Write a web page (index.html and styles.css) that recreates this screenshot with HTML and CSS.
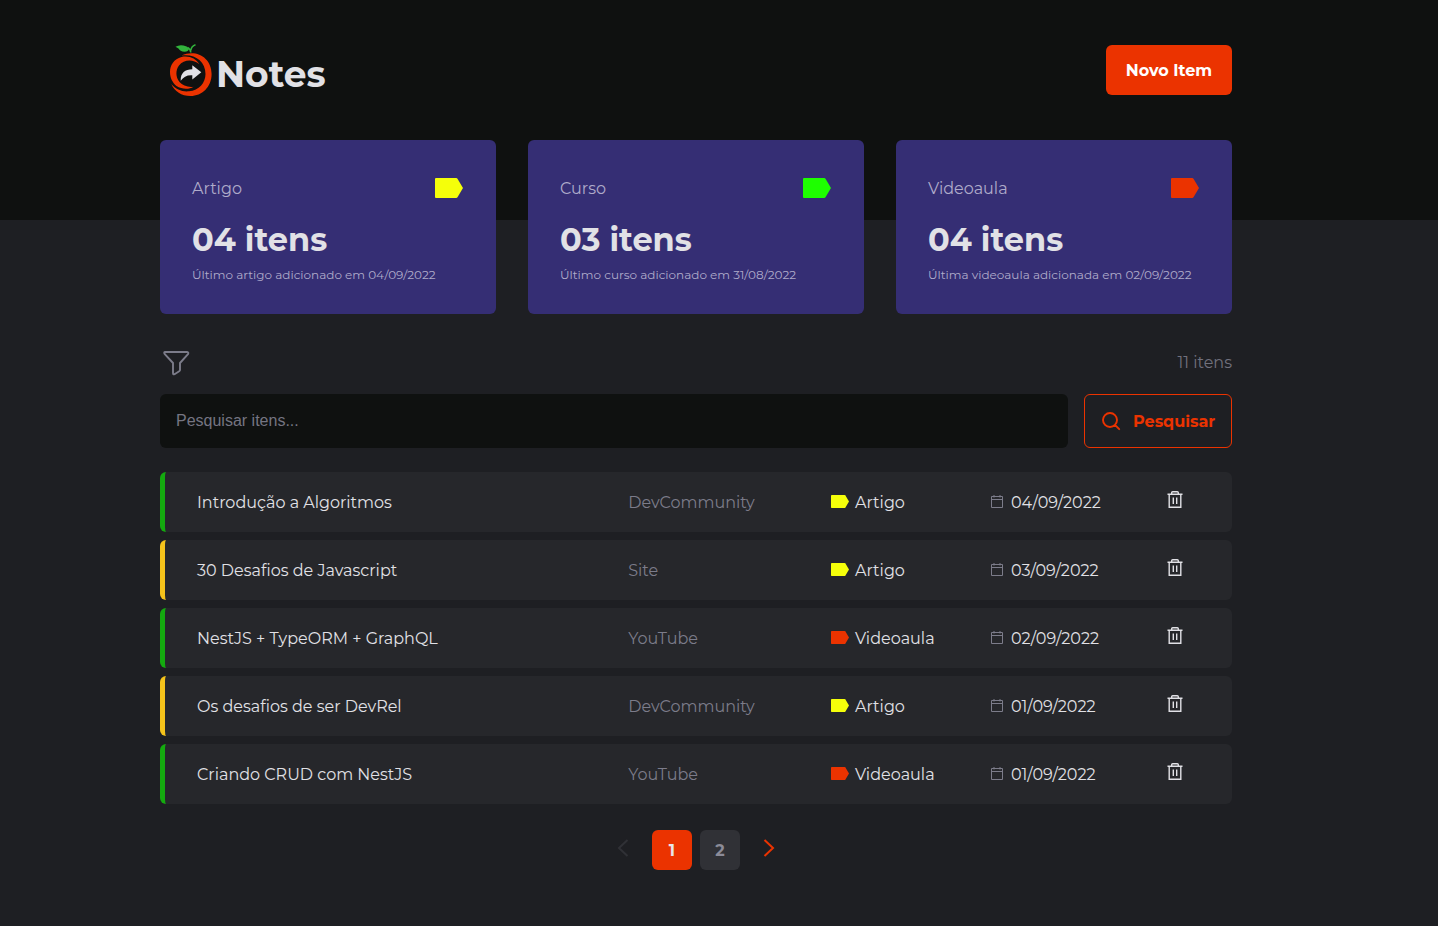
FILE: index.html
```html
<!DOCTYPE html>
<html lang="pt-BR">
<head>
<meta charset="utf-8">
<title>Notes</title>
<link rel="stylesheet" href="styles.css">
</head>
<body>
<svg class="sprite" xmlns="http://www.w3.org/2000/svg">
  <symbol id="tag" viewBox="0 0 28 20"><path d="M1 0H21.2Q22 0 22.5.8L28 10L22.5 19.2Q22 20 21.2 20H1Q0 20 0 19V1Q0 0 1 0Z" fill="currentColor"/></symbol>
  <symbol id="calendar" viewBox="0 0 12 13"><path d="M.5 1.5H11.5V12.5H.5ZM.5 4.5H11.5M3 0V2.5M9 0V2.5" fill="none" stroke="currentColor"/></symbol>
  <symbol id="trash" viewBox="0 0 16 18"><path d="M.5 3.2H15.500M2.200 3.200V16.200H13.800V3.200M4.700 3V1.800Q4.700.8 5.700.8H10.300Q11.300.8 11.300 1.800V3M6.300 6.500V13M9.700 6.500V13" fill="none" stroke="currentColor" stroke-width="1.400"/></symbol>
</svg>
<header class="header">
  <div class="container header-inner">
    <div class="logo">
      <svg class="logo-mark" viewBox="0 0 44 54">
        <path d="M6.500 3.800Q10 1.600 14.500 2.500Q18 3 20 5.500Q19.500 8.800 15.500 8.800Q11 8.500 9.500 5.500Z" fill="#32b43c"/>
        <path d="M18.500 4.500Q21.500 6 21.800 9.500M21.800 7.500Q22.500 3 26.500 1.800" fill="none" stroke="#32b43c" stroke-width="1.500"/>
        <path d="M30.300 21.300C27 15.500 20 12.300 12.500 14C5 16 1 22 1 29C1 35 3.500 39.500 7.500 43C13 46.500 20 46.700 24.500 43.700C19 44.500 13.500 42.500 10.500 39C6.500 34 6.500 27 10 22.500C14.500 17 23.500 15.500 30.300 21.300Z" fill="#eb3300"/>
        <path d="M12.500 12.500C27 5.800 42.600 14.500 42.600 31C42.600 44 33 53 21.500 53C12.500 53 5.500 48.500 2.300 41C7 46.500 13 49 20 48.300C30 47.300 36.500 40 36.500 31C36.500 18 25.500 10.500 12.500 12.500Z" fill="#eb3300"/>
        <path d="M11.700 37.700C11.500 30 16 26.300 23.300 26.300V22.300L32.300 29.300L23.300 36.500V32.200C18 31.800 14.500 33.800 11.700 37.700Z" fill="#e1e1e6"/>
      </svg>
      <span class="logo-text">Notes</span>
    </div>
    <button class="new-item"><span>Novo Item</span></button>
  </div>
</header>
<main class="container">
  <section class="cards">
    <article class="card"><div class="card-head"><span>Artigo</span><svg class="tag-big yellow"><use href="#tag"/></svg></div><strong class="count">04 itens</strong><p class="last">Último artigo adicionado em 04/09/2022</p></article>
    <article class="card"><div class="card-head"><span>Curso</span><svg class="tag-big lime"><use href="#tag"/></svg></div><strong class="count">03 itens</strong><p class="last">Último curso adicionado em 31/08/2022</p></article>
    <article class="card"><div class="card-head"><span>Videoaula</span><svg class="tag-big red"><use href="#tag"/></svg></div><strong class="count">04 itens</strong><p class="last">Última videoaula adicionada em 02/09/2022</p></article>
  </section>
  <div class="toolbar">
    <svg class="filter" viewBox="0 0 28 28"><path d="M3 3H25Q27 3.300 26 5.200L18 14V21Q18 21.700 17.200 22.200L12.500 25.200Q11 25.700 11 24V14L2.800 5.200Q1.500 3.300 3 3Z" fill="none" stroke="currentColor" stroke-width="1.900" stroke-linejoin="round"/></svg>
    <span class="total">11 itens</span>
  </div>
  <form class="search">
    <input class="search-input" type="text" placeholder="Pesquisar itens...">
    <button class="search-btn" type="button"><svg viewBox="0 0 20 20"><path d="M14.200 14.200L18.200 18.200M16 9A7 7 0 1 1 2 9A7 7 0 0 1 16 9Z" fill="none" stroke="currentColor" stroke-width="1.900" stroke-linecap="round"/></svg><span>Pesquisar</span></button>
  </form>
  <section class="list">
    <div class="row done"><span>Introdução a Algoritmos</span><span class="source">DevCommunity</span><span class="kind"><svg class="tag yellow"><use href="#tag"/></svg><span>Artigo</span></span><span class="date"><svg class="cal"><use href="#calendar"/></svg><span>04/09/2022</span></span><svg class="trash"><use href="#trash"/></svg></div>
    <div class="row pending"><span>30 Desafios de Javascript</span><span class="source">Site</span><span class="kind"><svg class="tag yellow"><use href="#tag"/></svg><span>Artigo</span></span><span class="date"><svg class="cal"><use href="#calendar"/></svg><span>03/09/2022</span></span><svg class="trash"><use href="#trash"/></svg></div>
    <div class="row done"><span>NestJS + TypeORM + GraphQL</span><span class="source">YouTube</span><span class="kind"><svg class="tag red"><use href="#tag"/></svg><span>Videoaula</span></span><span class="date"><svg class="cal"><use href="#calendar"/></svg><span>02/09/2022</span></span><svg class="trash"><use href="#trash"/></svg></div>
    <div class="row pending"><span>Os desafios de ser DevRel</span><span class="source">DevCommunity</span><span class="kind"><svg class="tag yellow"><use href="#tag"/></svg><span>Artigo</span></span><span class="date"><svg class="cal"><use href="#calendar"/></svg><span>01/09/2022</span></span><svg class="trash"><use href="#trash"/></svg></div>
    <div class="row done"><span>Criando CRUD com NestJS</span><span class="source">YouTube</span><span class="kind"><svg class="tag red"><use href="#tag"/></svg><span>Videoaula</span></span><span class="date"><svg class="cal"><use href="#calendar"/></svg><span>01/09/2022</span></span><svg class="trash"><use href="#trash"/></svg></div>
  </section>
  <nav class="pages">
    <svg class="arrow off" viewBox="0 0 12 18"><path d="M10.500 1L2 9L10.500 17" fill="none" stroke="currentColor" stroke-width="2"/></svg>
    <span class="page current">1</span><span class="page">2</span>
    <svg class="arrow" viewBox="0 0 12 18"><path d="M1.500 1L10 9L1.500 17" fill="none" stroke="currentColor" stroke-width="2"/></svg>
  </nav>
</main>
</body>
</html>
```
FILE: styles.css
```css
* { box-sizing: border-box; margin: 0; padding: 0; }
body { background: #1e1f23; color: #e1e1e6; font: 400 16px/26px Montserrat, Inter, sans-serif; height: 926px; overflow: hidden; }
button, input { font: inherit; }
svg { display: block; flex: none; }
.sprite { position: absolute; width: 0; height: 0; }
.container { width: 1072px; margin-left: 160px; }
.header { height: 220px; background: #0f1110; padding-top: 40px; }
.header-inner { display: flex; justify-content: space-between; align-items: flex-start; }
.logo { display: flex; padding: 3px 0 0 9px; }
.logo-mark { width: 44px; height: 54px; }
.logo-text { font-size: 36px; line-height: 46px; font-weight: 700; padding: 8px 0 0 3px; }
.new-item { width: 126px; height: 50px; margin-top: 5px; padding-top: 2px; border: 0; border-radius: 6px; background: #eb3300; color: #fff; font-weight: 700; }
.cards { display: grid; grid-template-columns: repeat(3, 1fr); gap: 32px; margin-top: -80px; }
.card { height: 174px; padding: 35px 32px; border-radius: 6px; background: #352e74; }
.card-head { display: flex; justify-content: space-between; align-items: center; height: 26px; color: #afabca; }
.card-head span, .total, .search-btn span, .row span:not(.kind):not(.date) { padding-top: 2px; }
.tag-big { width: 28px; height: 20px; margin-right: 1px; }
.yellow { color: #f5ff0a; }
.lime { color: #1eff00; }
.red { color: #eb3300; }
.count { display: block; font-size: 32px; line-height: 40px; margin-top: 19px; }
.last { font-size: 12px; line-height: 18px; margin-top: 6px; color: #afabca; white-space: nowrap; }
.toolbar { display: flex; justify-content: space-between; align-items: center; height: 32px; margin-top: 32px; padding-left: 2px; color: #7c7c8a; }
.filter { width: 28px; height: 28px; margin-top: 1px; }
.total { color: #71717d; }
.search { display: flex; gap: 16px; margin-top: 16px; }
.search-input { width: 908px; height: 54px; padding: 0 16px; border: 0; border-radius: 6px; background: #0f1110; font-family: "Liberation Sans", sans-serif; }
.search-input::placeholder { color: #757582; }
.search-btn { display: flex; align-items: center; gap: 12px; width: 148px; height: 54px; padding-left: 16px; border: 1px solid #eb3300; border-radius: 6px; background: none; color: #eb3300; font-weight: 700; }
.search-btn svg { width: 20px; height: 20px; }
.list { display: grid; gap: 8px; margin-top: 24px; }
.row { display: grid; grid-template-columns: 431.2px 202.8px 160px 176px 16px; align-items: center; height: 60px; padding-left: 32px; border-left: 5px solid; border-radius: 6px; background: #26272b; white-space: nowrap; }
.done { border-left-color: #14aa0f; }
.pending { border-left-color: #f5c31b; }
.source { color: #7c7c8a; }
.kind, .date { display: flex; align-items: center; gap: 6px; }
.tag { width: 18px; height: 13px; margin-bottom: 1px; }
.cal { width: 12px; height: 13px; color: #7c7c8a; margin-bottom: 1px; }
.date { gap: 8px; }
.trash { width: 16px; height: 18px; margin-bottom: 4px; }
.pages { display: flex; align-items: center; gap: 8px; margin: 26px 0 0 457px; color: #eb3300; }
.page { display: grid; place-items: center; width: 40px; height: 40px; padding-top: 2px; border-radius: 6px; background: #303136; color: #8b8b98; font-weight: 700; }
.current { background: #eb3300; color: #e9e5ea; }
.arrow { width: 12px; height: 18px; margin: 0 0 4px 15px; }
.off { margin: 0 15px 4px 0; color: #303136; }
```
